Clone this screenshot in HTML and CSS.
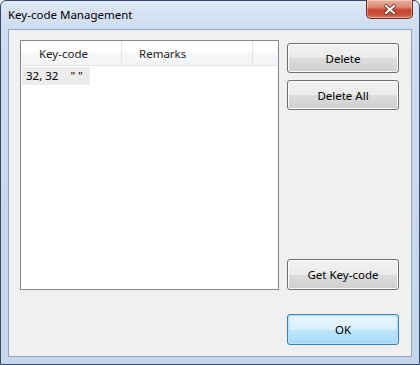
FILE: index.html
```html
<!DOCTYPE html>
<html>
<head>
<meta charset="utf-8">
<link rel="stylesheet" href="styles.css">
</head>
<body>
<div class="window">
  <div class="titlebar">
    <span class="title">Key-code Management</span>
    <div class="close">
      <svg width="14" height="11" viewBox="0 0 14 11">
        <path d="M3 2 L11 9 M11 2 L3 9" stroke="#5a2a22" stroke-width="3.6" stroke-linecap="square" fill="none"/>
        <path d="M3 2 L11 9 M11 2 L3 9" stroke="#ffffff" stroke-width="2.2" stroke-linecap="square" fill="none"/>
      </svg>
    </div>
  </div>
  <div class="client">
    <div class="main">
      <div class="listview">
        <div class="header">
          <div class="col col1">Key-code</div>
          <div class="col col2">Remarks</div>
          <div class="col col3"></div>
        </div>
        <div class="rows">
          <div class="row"><span class="cell">32, 32<span class="chr">" "</span></span></div>
        </div>
      </div>
      <div class="buttons">
        <button class="btn">Delete</button>
        <button class="btn">Delete All</button>
        <div class="spacer"></div>
        <button class="btn tall">Get Key-code</button>
      </div>
    </div>
    <div class="footer">
      <button class="btn tall default">OK</button>
    </div>
  </div>
</div>
</body>
</html>
```

FILE: styles.css
```css
html, body {
  margin: 0;
  padding: 0;
  background: #ffffff;
}
body {
  font-family: "Noto Sans", "Open Sans", sans-serif;
  font-size: 11.5px;
  color: #000;
}
.window {
  width: 420px;
  height: 365px;
  box-sizing: border-box;
  border: 1px solid #34496a;
  border-radius: 6px 6px 0 0;
  background: linear-gradient(#dfe9f6 0px, #cddcef 28px, #c6d6eb 100%);
  padding: 0 7px 7px 7px;
  display: flex;
  flex-direction: column;
  position: relative;
}
.titlebar {
  height: 28px;
  display: flex;
  align-items: center;
  flex: none;
}
.title {
  margin-top: -1px;
  font-size: 11.5px;
  color: #000;
}
.close {
  position: absolute;
  top: -1px;
  left: 365px;
  width: 47px;
  height: 19px;
  box-sizing: border-box;
  border: 1px solid #6e2a20;
  border-top: none;
  border-radius: 0 0 5px 5px;
  background: linear-gradient(#eab0a3 0%, #dc8672 40%, #c8452d 55%, #c9553c 85%, #dc8a70 100%);
  display: flex;
  align-items: center;
  justify-content: center;
  box-shadow: inset 0 0 0 1px rgba(255,255,255,0.35);
}
.client {
  flex: 1;
  border: 1px solid #8fa6c6;
  background: #f0f0f0;
  padding: 10px 12px 0 11px;
  display: flex;
  flex-direction: column;
}
.main {
  display: flex;
  gap: 8px;
  height: 250px;
}
.listview {
  width: 261px;
  height: 250px;
  box-sizing: border-box;
  border: 1px solid #828790;
  background: #ffffff;
  display: flex;
  flex-direction: column;
}
.header {
  display: flex;
  height: 25px;
  box-sizing: border-box;
  border-bottom: 1px solid #e5e5e5;
  background: linear-gradient(#ffffff 0%, #ffffff 45%, #f7f8f9 50%, #f3f4f6 100%);
}
.col {
  box-sizing: border-box;
  border-right: 1px solid #e5e5e5;
  display: flex;
  align-items: center;
  padding-left: 18px;
  color: #1e1e1e;
}
.col1 { width: 101px; }
.col2 { width: 131px; padding-left: 17px; }
.col3 { flex: 1; border-right: none; }
.rows {
  padding: 1px 0 0 1px;
}
.row {
  display: flex;
}
.cell {
  display: block;
  background: #ececec;
  height: 18px;
  line-height: 18px;
  padding: 0 4px 0 4px;
  width: 60px;
  color: #000;
  white-space: nowrap;
}
.chr {
  margin-left: 12px;
}
.buttons {
  width: 112px;
  display: flex;
  flex-direction: column;
  padding-top: 3px;
  gap: 7px;
}
.spacer { flex: 1; }
.btn {
  width: 112px;
  height: 30px;
  box-sizing: border-box;
  border: 1px solid #707070;
  border-radius: 3px;
  background: linear-gradient(#f2f2f2 0%, #ebebeb 50%, #dddddd 51%, #cfcfcf 100%);
  box-shadow: inset 0 0 0 1px #fbfbfb;
  font-family: "Noto Sans", "Open Sans", sans-serif;
  font-size: 11.5px;
  color: #000;
  padding: 0;
  margin: 0;
}
.btn.tall { height: 31px; }
.footer {
  display: flex;
  justify-content: flex-end;
  margin-top: 24px;
}
.btn.default {
  border-color: #3c7fb1;
  background: linear-gradient(#eaf6fd 0%, #d9f0fc 50%, #bee6fd 51%, #a7d9f5 100%);
  box-shadow: inset 0 0 0 1px #b8e4fa, inset 0 0 2px 1px #9fd6f3;
}
```
